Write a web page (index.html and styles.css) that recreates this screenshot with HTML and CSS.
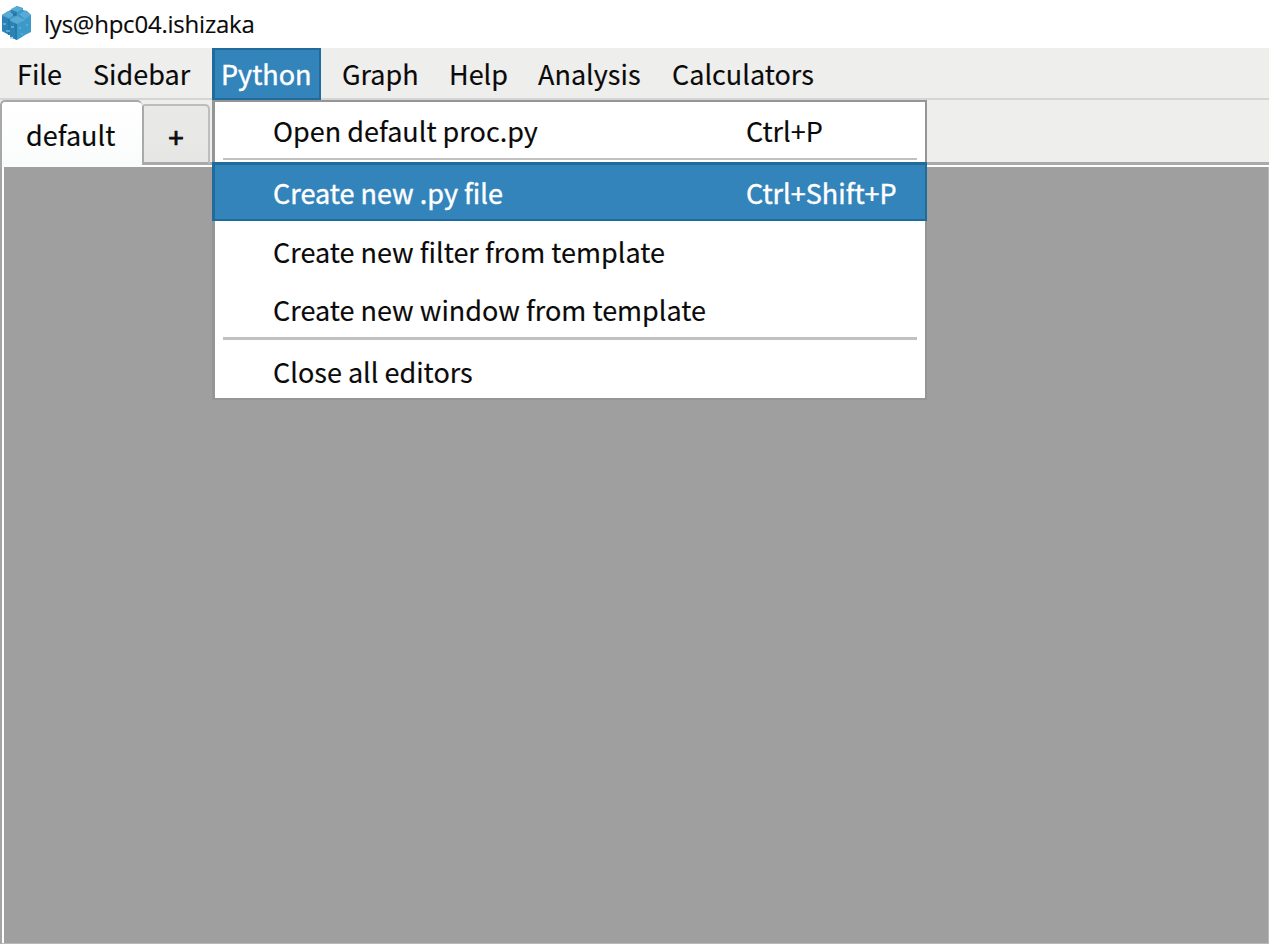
FILE: index.html
```html
<!DOCTYPE html>
<html lang="en">
<head>
<meta charset="utf-8">
<title>lys@hpc04.ishizaka</title>
<link rel="stylesheet" href="styles.css">
</head>
<body>
<div class="window">
  <header class="titlebar">
    <svg class="logo" viewBox="0 0 30 34" width="30" height="34">
      <path fill="#3c9acb" d="M0 9 5 6 10 3 15 0 21 2V4L25 5 29 9V26L23 29 20 31 15 34 8 31V29L0 25Z"/>
      <path fill="#5aaad3" d="M9 3 15 0 21 3 15 6ZM0 9 6 5 14 8 7 12ZM17 8 23 5 29 9 23 13ZM7 14 15 10 23 14 15 18Z"/>
      <path fill="#2c82b4" d="M9 4 15 6V10L9 7ZM0 10 7 13V29L0 25ZM8 15 15 18V34L8 31Z"/>
      <path fill="#247aaa" d="M6 13H8V29H6ZM13 18H15V33H13ZM11 7H14V10H11Z"/>
      <path fill="#5aaad3" d="M1 17H4V19H1ZM9 20H12V22H9ZM17 21H19V23H17ZM24 18H26V20H24ZM19 27H21V29H19ZM4 24H8V26H4Z"/>
      <path fill="#b5d8ea" d="M8 31H11V33H8Z"/>
    </svg>
    <span class="title">lys@hpc04.ishizaka</span>
  </header>
  <nav class="menubar">
    <span class="entry file">File</span>
    <span class="entry sidebar">Sidebar</span>
    <span class="entry python">Python</span>
    <span class="entry graph">Graph</span>
    <span class="entry help">Help</span>
    <span class="entry analysis">Analysis</span>
    <span class="entry calculators">Calculators</span>
  </nav>
  <div class="tabs">
    <div class="tab current">default</div>
    <div class="tab add">+</div>
  </div>
  <main class="workspace"></main>
  <div class="menu">
    <div class="item first"><span class="label">Open default proc.py</span><span>Ctrl+P</span></div>
    <div class="rule thin"></div>
    <div class="item selected"><span class="label">Create new .py file</span><span>Ctrl+Shift+P</span></div>
    <div class="item"><span class="label">Create new filter from template</span></div>
    <div class="item"><span class="label">Create new window from template</span></div>
    <div class="rule"></div>
    <div class="item last"><span class="label">Close all editors</span></div>
  </div>
</div>
</body>
</html>
```
FILE: styles.css
```css
* { box-sizing: border-box; }
body { margin: 0; }
.window {
  position: relative;
  display: flex;
  flex-direction: column;
  width: 1269px;
  height: 944px;
  overflow: hidden;
  background: #fff;
  color: #0a0a0a;
  font: 27px/38px "Noto Sans CJK JP", "Noto Sans", sans-serif;
  -webkit-text-stroke: 0.15px currentColor;
  white-space: nowrap;
}
.titlebar {
  display: flex;
  flex: none;
  height: 48px;
  padding: 6px 0 0 2px;
}
.title {
  margin-left: 12px;
  font: 24px/36px "Open Sans", "Noto Sans", sans-serif;
  letter-spacing: -0.22px;
}
.menubar {
  display: flex;
  flex: none;
  height: 52px;
  background: #eeeeec;
  border-bottom: 2px solid #d5d5d4;
}
.entry { height: 52px; padding-top: 7px; }
.file { width: 93px; padding-left: 17px; }
.sidebar { width: 119px; }
.python {
  width: 109px;
  padding: 5px 0 0 6px;
  color: #fff;
  background: #3384bb;
  border: 2px solid #206b99;
  border-left-width: 3px;
  -webkit-text-stroke-width: 0.4px;
}
.graph { width: 128px; padding-left: 21px; }
.help { width: 89px; }
.analysis { width: 134px; }
.tabs {
  display: flex;
  flex: none;
  height: 67px;
  background: linear-gradient(#eeeeec 62px, #a9a9a9 62px, #a9a9a9 65px, #fff 65px);
}
.tab.current {
  width: 142px;
  height: 67px;
  padding: 14px 0 0 24px;
  border: 2px solid #a8a8a8;
  border-width: 2px 0 0 2px;
  border-radius: 5px 5px 0 0;
  background: linear-gradient(#fff, #fafbfb);
}
.tab.add {
  width: 68px;
  height: 61px;
  margin-top: 4px;
  padding-top: 12px;
  border: 2px solid #bdbdbd;
  border-left-color: #a9a9a9;
  border-bottom: 3px solid #a9a9a9;
  border-radius: 3px 5px 0 0;
  background: linear-gradient(#e9e9e7, #e6e6e4);
  text-align: center;
  -webkit-text-stroke-width: 0.9px;
}
.workspace {
  flex: 1;
  background: #9f9f9f;
  border-left: 2px solid #a4a4a4;
  border-right: 1px solid #b8b8b8;
  border-bottom: 1px solid #b8b8b8;
  box-shadow: inset 2px 0 #fff;
}
.menu {
  position: absolute;
  left: 212px;
  top: 100px;
  width: 715px;
  height: 300px;
  background: #fff;
  border: 2px solid #959595;
  border-left-width: 3px;
}
.item {
  display: flex;
  height: 58px;
  padding: 12px 0 0 58px;
}
.item.first { height: 56px; padding-top: 10px; }
.item.last { padding-top: 13px; }
.label { width: 473px; }
.item.selected {
  height: 59px;
  margin: 2px -2px 0 -3px;
  padding-top: 9px;
  color: #fff;
  background: #3384bb;
  border: solid #206b99;
  border-width: 3px 2px 2px 3px;
  -webkit-text-stroke-width: 0.4px;
}
.rule { height: 3px; margin: 0 8px; background: #c1c1c1; }
.rule.thin { height: 2px; }
```
